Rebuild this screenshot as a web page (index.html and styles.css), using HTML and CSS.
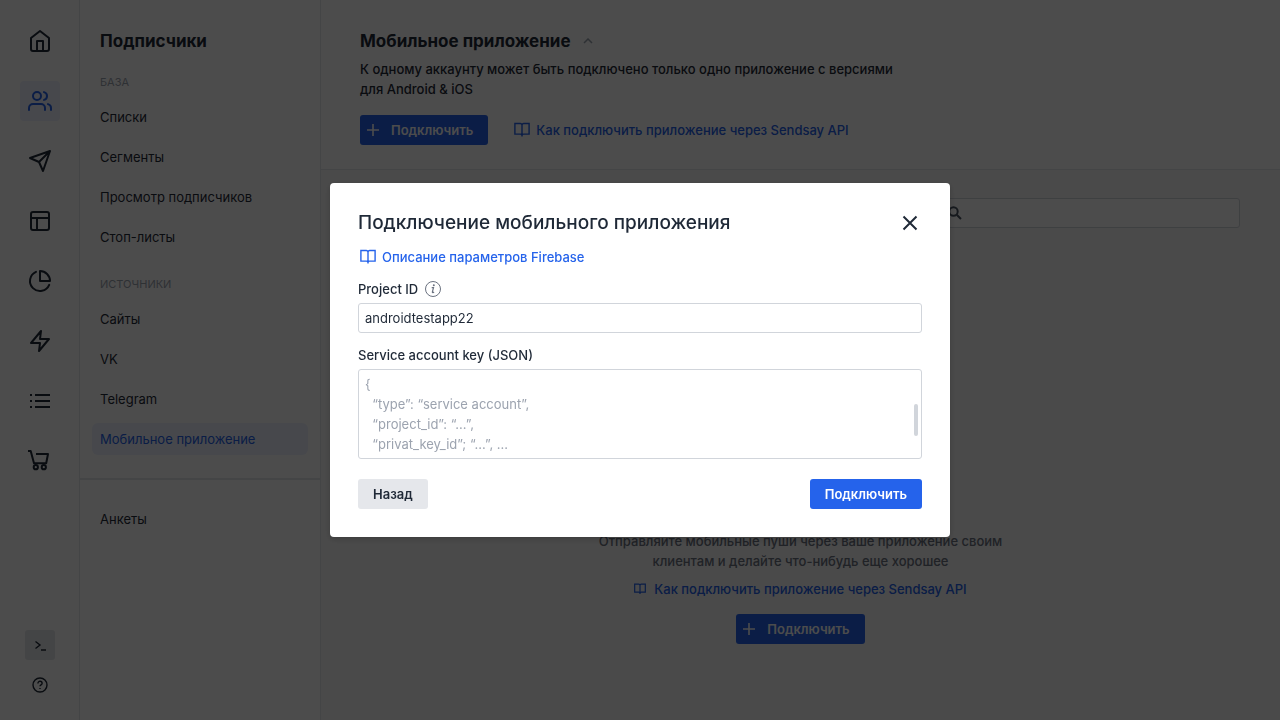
FILE: index.html
```html
<!DOCTYPE html>
<html lang="ru">
<head>
<meta charset="utf-8">
<meta name="viewport" content="width=device-width, initial-scale=1">
<title>Мобильное приложение</title>
<link rel="stylesheet" href="styles.css">
</head>
<body>
<svg class="sprite" aria-hidden="true">
  <symbol id="i-book" viewBox="0 0 16 16"><path d="M8 3.200C8 2.200 7.300 1.500 6.300 1.500H.9v10.600h5.500c.9 0 1.600.6 1.600 1.500M8 3.200c0-1 .7-1.700 1.700-1.700h5.400v10.600H9.600c-.9 0-1.600.6-1.600 1.500M8 3.200v11.300"/></symbol>
  <symbol id="i-plus" viewBox="0 0 12 12"><path d="M6 0v12M0 6h12"/></symbol>
</svg>
<div class="app">
  <nav class="rail" aria-label="Разделы">
    <a class="rail-item" href="#"><svg class="icon" viewBox="0 0 24 24"><path d="M3 9l9-7 9 7v11a2 2 0 0 1-2 2H5a2 2 0 0 1-2-2z"/><path d="M9 22V12h6v10"/></svg></a>
    <a class="rail-item rail-active" href="#"><svg class="icon" viewBox="0 0 24 24"><path d="M17 21v-2a4 4 0 0 0-4-4H5a4 4 0 0 0-4 4v2"/><circle cx="9" cy="7" r="4"/><path d="M23 21v-2a4 4 0 0 0-3-3.87M16 3.13a4 4 0 0 1 0 7.75"/></svg></a>
    <a class="rail-item" href="#"><svg class="icon" viewBox="0 0 24 24"><path d="M22 2L11 13M22 2l-7 20-4-9-9-4 20-7z"/></svg></a>
    <a class="rail-item" href="#"><svg class="icon" viewBox="0 0 24 24"><rect x="3" y="3" width="18" height="18" rx="2"/><path d="M3 9h18M9 21V9"/></svg></a>
    <a class="rail-item" href="#"><svg class="icon" viewBox="0 0 24 24"><path d="M21.21 15.89A10 10 0 1 1 8 2.83"/><path d="M22 12A10 10 0 0 0 12 2v10z"/></svg></a>
    <a class="rail-item" href="#"><svg class="icon" viewBox="0 0 24 24"><path d="M13 2L3 14h9l-1 8 10-12h-9l1-8z"/></svg></a>
    <a class="rail-item" href="#"><svg class="icon icon-square" viewBox="0 0 24 24"><path d="M7 6h15M7 12h15M7 18h15M2 6h2M2 12h2M2 18h2"/></svg></a>
    <a class="rail-item" href="#"><svg class="icon icon-square" viewBox="0 0 24 24"><path d="M0 2h2.700l3.300 12.200h12.200L20 5H8"/><circle cx="7.800" cy="18.200" r="2.100"/><circle cx="15.800" cy="18.200" r="2.100"/></svg></a>
    <div class="rail-bottom">
      <button class="rail-small rail-console" type="button" aria-label="Консоль"><svg class="icon-small" viewBox="0 0 16 16"><path d="M3.500 4.500l4.500 3.500-4.500 3.500M9 13h5"/></svg></button>
      <button class="rail-small" type="button" aria-label="Помощь"><svg class="icon-small" viewBox="0 0 16 16"><circle cx="8" cy="8" r="7"/><path d="M5.900 6.400a2.100 2.100 0 0 1 4.200 0c0 1.400-2.100 1.600-2.100 2.900M8 10.900v1.200"/></svg></button>
    </div>
  </nav>

  <aside class="sidebar">
    <h2 class="heading sidebar-title">Подписчики</h2>
    <h3 class="group">База</h3>
    <nav class="menu">
      <a class="menu-item" href="#">Списки</a>
      <a class="menu-item" href="#">Сегменты</a>
      <a class="menu-item" href="#">Просмотр подписчиков</a>
      <a class="menu-item" href="#">Стоп-листы</a>
    </nav>
    <h3 class="group">Источники</h3>
    <nav class="menu">
      <a class="menu-item" href="#">Сайты</a>
      <a class="menu-item" href="#">VK</a>
      <a class="menu-item" href="#">Telegram</a>
      <a class="menu-item menu-active" href="#">Мобильное приложение</a>
    </nav>
    <hr class="divider">
    <nav class="menu">
      <a class="menu-item" href="#">Анкеты</a>
    </nav>
  </aside>

  <main class="main">
    <header class="intro">
      <div class="intro-title">
        <h1 class="heading">Мобильное приложение</h1>
        <svg class="chevron" viewBox="0 0 10 6"><path d="M1 5l4-4 4 4"/></svg>
      </div>
      <p class="intro-text">К одному аккаунту может быть подключено только одно приложение с версиями для Android &amp; iOS</p>
      <div class="intro-actions">
        <button class="btn btn-primary btn-icon" type="button"><svg class="plus"><use href="#i-plus"/></svg>Подключить</button>
        <a class="link" href="#"><svg class="book"><use href="#i-book"/></svg>Как подключить приложение через Sendsay API</a>
      </div>
    </header>
    <section class="content">
      <label class="search">
        <svg class="search-icon" viewBox="0 0 16 16"><circle cx="6.500" cy="6.500" r="4.200"/><path d="M9.700 9.700l4.300 4.300"/></svg>
        <input class="search-input" type="search" aria-label="Поиск">
      </label>
      <div class="empty">
        <p class="empty-text">Отправляйте мобильные пуши через ваше приложение своим клиентам и делайте что-нибудь еще хорошее</p>
        <a class="link empty-link" href="#"><svg class="book book-small"><use href="#i-book"/></svg>Как подключить приложение через Sendsay API</a>
        <button class="btn btn-primary btn-icon" type="button"><svg class="plus"><use href="#i-plus"/></svg>Подключить</button>
      </div>
    </section>
  </main>
</div>

<div class="overlay">
  <form class="dialog" role="dialog" aria-modal="true" aria-labelledby="dialog-title">
    <div class="dialog-head">
      <h2 class="dialog-title" id="dialog-title">Подключение мобильного приложения</h2>
      <button class="close" type="button" aria-label="Закрыть"><svg class="close-icon" viewBox="0 0 16 16"><path d="M1.500 1.500l13 13M14.500 1.500l-13 13"/></svg></button>
    </div>
    <a class="link dialog-link" href="#"><svg class="book"><use href="#i-book"/></svg>Описание параметров Firebase</a>
    <div class="field">
      <div class="label-row">
        <label class="label" for="project">Project ID</label>
        <svg class="info" viewBox="0 0 16 16"><circle cx="8" cy="8" r="7.500"/><path class="info-stem" d="M6.700 6.700h1.800l-1.100 4.200q-.2.900.5.800.6-.1 1.100-.7"/><circle class="info-dot" cx="8.800" cy="4.200" r="1"/></svg>
      </div>
      <input class="control" id="project" type="text" value="androidtestapp22">
    </div>
    <div class="field">
      <label class="label" for="key">Service account key (JSON)</label>
      <div class="area-wrap">
        <textarea class="control area" id="key" placeholder="{&#10;  “type”: “service account”,&#10;  “project_id”: “...”,&#10;  “privat_key_id”; “...”, ..."></textarea>
        <span class="thumb"></span>
      </div>
    </div>
    <div class="dialog-actions">
      <button class="btn btn-secondary" type="button">Назад</button>
      <button class="btn btn-primary" type="submit">Подключить</button>
    </div>
  </form>
</div>
</body>
</html>
```
FILE: styles.css
```css
* { box-sizing: border-box; }

body {
  margin: 0;
  font: 400 13px/20px Inter, "Liberation Sans", sans-serif;
  color: #1f2937;
  background: #fff;
}

h1, h2, h3, p { margin: 0; }
a { color: inherit; text-decoration: none; }
button, input, textarea { font: inherit; color: inherit; }
svg { flex: none; fill: none; stroke: currentColor; }

.sprite { position: absolute; width: 0; height: 0; }

.app { display: flex; min-height: 100vh; }

.heading { font-size: 17px; line-height: 24px; font-weight: 700; }

.rail {
  display: flex;
  flex-direction: column;
  align-items: center;
  gap: 20px;
  width: 80px;
  padding: 21px 0 20px;
  border-right: 1px solid #e5e7eb;
}
.rail-item {
  display: grid;
  place-items: center;
  width: 40px;
  height: 40px;
  border-radius: 4px;
}
.rail-active { color: #2563eb; background: #eef2fd; }
.icon {
  width: 24px;
  height: 24px;
  stroke-width: 2;
  stroke-linecap: round;
  stroke-linejoin: round;
}
.icon-square { stroke-linecap: butt; }
.rail-bottom {
  display: flex;
  flex-direction: column;
  gap: 10px;
  margin-top: auto;
}
.rail-small {
  display: grid;
  place-items: center;
  width: 30px;
  height: 30px;
  padding: 0;
  border: 0;
  border-radius: 3px;
  background: none;
}
.rail-console { background: #e5e7eb; }
.icon-small { width: 16px; height: 16px; stroke-width: 1.4; }

.sidebar { width: 240px; padding-top: 29px; }
.sidebar-title { padding-left: 20px; }
.group {
  margin: 23px 20px 11px;
  font-size: 11px;
  line-height: 16px;
  font-weight: 400;
  text-transform: uppercase;
  color: #9ca3af;
}
.sidebar-title + .group { margin-top: 21px; }
.menu {
  display: flex;
  flex-direction: column;
  gap: 8px;
  padding: 0 12px;
}
.menu-item { padding: 6px 8px; border-radius: 6px; }
.menu-active { color: #2563eb; background: #eef2fd; }
.divider {
  height: 2px;
  margin: 23px 0;
  border: 0;
  background: #e5e7eb;
}

.main {
  display: flex;
  flex: 1;
  flex-direction: column;
  border-left: 1px solid #e5e7eb;
}
.intro {
  padding: 29px 39px 24px;
  border-bottom: 1px solid #e5e7eb;
}
.intro-title { display: flex; align-items: center; gap: 12px; }
.chevron { width: 10px; height: 6px; color: #9ca3af; stroke-width: 1.5; }
.intro-text { max-width: 540px; margin-top: 6px; font-weight: 500; }
.intro-actions {
  display: flex;
  align-items: center;
  gap: 26px;
  margin-top: 16px;
}

.btn {
  height: 30px;
  padding: 0 15px;
  border: 0;
  border-radius: 3px;
  font-weight: 600;
}
.btn-primary { color: #fff; background: #2563eb; }
.btn-secondary { background: #e5e7eb; }
.btn-icon {
  display: flex;
  align-items: center;
  gap: 12px;
  padding-left: 7px;
}
.plus { width: 12px; height: 12px; stroke-width: 1.6; }

.link {
  display: flex;
  align-items: center;
  gap: 6px;
  font-weight: 500;
  color: #2563eb;
}
.book { width: 16px; height: 16px; stroke-width: 1.4; }
.book-small { width: 12px; height: 12px; stroke-width: 1.6; }

.content {
  display: flex;
  flex: 1;
  flex-direction: column;
  justify-content: space-between;
  padding: 28px 40px 76px;
  background: #f7f7f8;
}
.search {
  display: flex;
  align-items: center;
  align-self: flex-end;
  gap: 6px;
  width: 300px;
  height: 30px;
  padding: 0 6px;
  border: 1px solid #d1d5db;
  border-radius: 3px;
  background: #fff;
}
.search-icon { width: 16px; height: 16px; color: #4b5563; stroke-width: 2; }
.search-input {
  flex: 1;
  min-width: 0;
  border: 0;
  outline: 0;
  background: none;
}
.empty { display: flex; flex-direction: column; align-items: center; }
.empty-text {
  max-width: 420px;
  font-weight: 500;
  text-align: center;
  color: #6b7280;
}
.empty-link { gap: 8px; margin: 8px 0 15px; }

.overlay {
  position: fixed;
  inset: 0;
  display: grid;
  place-items: center;
  background: rgba(0, 0, 0, .7);
}
.dialog {
  display: flex;
  flex-direction: column;
  gap: 12px;
  width: 620px;
  max-width: 100%;
  padding: 28px;
  border-radius: 4px;
  background: #fff;
  box-shadow: 0 2px 6px rgba(0, 0, 0, .2);
}
.dialog-head {
  display: flex;
  align-items: center;
  justify-content: space-between;
}
.dialog-title { font-size: 19px; line-height: 24px; font-weight: 500; }
.close {
  display: grid;
  place-items: center;
  width: 24px;
  height: 24px;
  padding: 0;
  border: 0;
  background: none;
}
.close-icon { width: 16px; height: 16px; stroke-width: 2; }
.dialog-link { align-self: flex-start; padding-left: 2px; }
.field { display: flex; flex-direction: column; gap: 4px; }
.label-row { display: flex; align-items: center; gap: 7px; }
.label { font-weight: 500; }
.info { width: 16px; height: 16px; color: #6b7280; stroke-width: 1; }
.info-stem { stroke-width: 1.2; }
.info-dot { fill: currentColor; stroke: none; }
.control {
  display: block;
  width: 100%;
  height: 30px;
  padding: 4px 6px;
  border: 1px solid #d1d5db;
  border-radius: 3px;
  outline: 0;
  background: #fff;
}
.area-wrap { position: relative; }
.area { height: 90px; resize: none; overflow: hidden; }
.area::placeholder { color: #9ca3af; opacity: 1; }
.thumb {
  position: absolute;
  top: 35px;
  right: 4px;
  width: 4px;
  height: 32px;
  border-radius: 2px;
  background: #d1d5db;
}
.dialog-actions {
  display: flex;
  justify-content: space-between;
  margin-top: 8px;
}
```
